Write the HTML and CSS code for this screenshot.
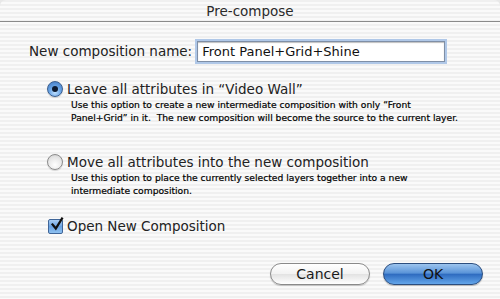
FILE: index.html
```html
<!DOCTYPE html>
<html>
<head>
<meta charset="utf-8">
<link rel="stylesheet" href="styles.css">
</head>
<body>
<div class="window">
  <div class="titlebar">Pre-compose</div>
  <div class="content">
    <div class="name-row">
      <span class="name-label">New composition name:</span>
      <span class="field">Front Panel+Grid+Shine</span>
    </div>
    <div class="option">
      <div class="opt-head">
        <span class="radio on"><span class="dot"></span></span>
        <span class="opt-label">Leave all attributes in “Video Wall”</span>
      </div>
      <div class="desc"><span class="line">Use this option to create a new intermediate composition with only “Front</span><span class="line">Panel+Grid” in it.&nbsp; The new composition will become the source to the current layer.</span></div>
    </div>
    <div class="option second">
      <div class="opt-head">
        <span class="radio"></span>
        <span class="opt-label">Move all attributes into the new composition</span>
      </div>
      <div class="desc"><span class="line">Use this option to place the currently selected layers together into a new</span><span class="line">intermediate composition.</span></div>
    </div>
    <div class="check-row">
      <span class="checkbox">
        <svg width="16" height="16" viewBox="0 0 16 16"><path d="M3.5 7.5 L6.8 11.5 L13 1.5" fill="none" stroke="#111" stroke-width="2.2" stroke-linecap="square"/></svg>
      </span>
      <span class="opt-label">Open New Composition</span>
    </div>
    <div class="buttons">
      <span class="btn cancel">Cancel</span>
      <span class="btn ok">OK</span>
    </div>
  </div>
</div>
</body>
</html>
```
FILE: styles.css
```css
html, body {
  margin: 0;
  padding: 0;
  width: 500px;
  height: 299px;
  overflow: hidden;
  background: #e8e8e8;
}
.window {
  width: 500px;
  height: 299px;
  font-family: "DejaVu Sans", "Lucida Grande", sans-serif;
  color: #222;
  background: repeating-linear-gradient(to bottom, #f0f0f0 0px, #f0f0f0 2px, #fafafa 2px, #fafafa 4px);
  border-radius: 6px 6px 0 0;
  display: flex;
  flex-direction: column;
}
.titlebar {
  height: 22px;
  line-height: 22px;
  text-align: center;
  font-size: 13.5px;
  color: #2a2a2a;
  border-bottom: 1px solid #8a8a8a;
  box-sizing: border-box;
}
.content {
  padding: 18px 0 0 29px;
  display: flex;
  flex-direction: column;
}
.name-row {
  display: flex;
  align-items: center;
  height: 22px;
}
.name-label {
  font-size: 13.5px;
  margin-right: 5px;
}
.field {
  width: 248px;
  height: 21px;
  box-sizing: border-box;
  background: #fff;
  border: 1px solid #7f8fa6;
  box-shadow: 0 0 0 2px #b0c8e8, inset 0 1px 1px rgba(0,0,0,0.25);
  font-size: 13px;
  line-height: 19px;
  padding-left: 4px;
  color: #111;
}
.option {
  margin-top: 17px;
  padding-left: 18px;
}
.option.second {
  margin-top: 28px;
}
.opt-head {
  display: flex;
  align-items: center;
  height: 20px;
}
.radio {
  width: 16px;
  height: 16px;
  border-radius: 50%;
  box-sizing: border-box;
  border: 1px solid #8b8b8b;
  background: radial-gradient(circle at 50% 70%, #ffffff 0%, #e6e6e6 60%, #c9c9c9 100%);
  margin-right: 4px;
  display: flex;
  align-items: center;
  justify-content: center;
  box-shadow: 0 1px 1px rgba(0,0,0,0.15);
}
.radio.on {
  border-color: #3b5f8f;
  background: radial-gradient(circle at 50% 75%, #bfe0ff 0%, #6aa5e6 45%, #3c75c0 100%);
}
.dot {
  width: 6px;
  height: 6px;
  border-radius: 50%;
  background: #0c1a30;
}
.opt-label {
  font-size: 13.5px;
  color: #222;
}
.desc {
  font-size: 9.2px;
  line-height: 13px;
  color: #000;
  -webkit-text-stroke: 0.2px #000;
  padding-left: 24px;
  margin-top: -1px;
  display: flex;
  flex-direction: column;
}
.line {
  white-space: nowrap;
}
.check-row {
  display: flex;
  align-items: center;
  height: 20px;
  margin-top: 19px;
  padding-left: 19px;
}
.checkbox {
  width: 15px;
  height: 15px;
  box-sizing: border-box;
  border: 1px solid #3f6598;
  border-radius: 2px;
  background: linear-gradient(to bottom, #a9cdf3, #6aa2e2 50%, #8ec1f0);
  margin-right: 4px;
  position: relative;
}
.checkbox svg {
  position: absolute;
  left: 0;
  top: -3px;
}
.buttons {
  display: flex;
  justify-content: flex-end;
  gap: 13px;
  margin-top: 27px;
  padding-right: 17px;
}
.btn {
  width: 100px;
  height: 22px;
  box-sizing: border-box;
  border-radius: 11px;
  font-size: 14px;
  line-height: 20px;
  text-align: center;
  color: #1a1a1a;
}
.cancel {
  border: 1px solid #8a8a8a;
  background: linear-gradient(to bottom, #ffffff 0%, #f2f2f2 50%, #e2e2e2 51%, #ffffff 100%);
  box-shadow: 0 1px 1px rgba(0,0,0,0.2);
}
.ok {
  border: 1px solid #2b4d7e;
  background: linear-gradient(to bottom, #9cc4ee 0%, #5a94d8 45%, #2f6cc0 52%, #64a6ea 100%);
  box-shadow: 0 1px 1px rgba(0,0,0,0.25);
  color: #111;
}
```
